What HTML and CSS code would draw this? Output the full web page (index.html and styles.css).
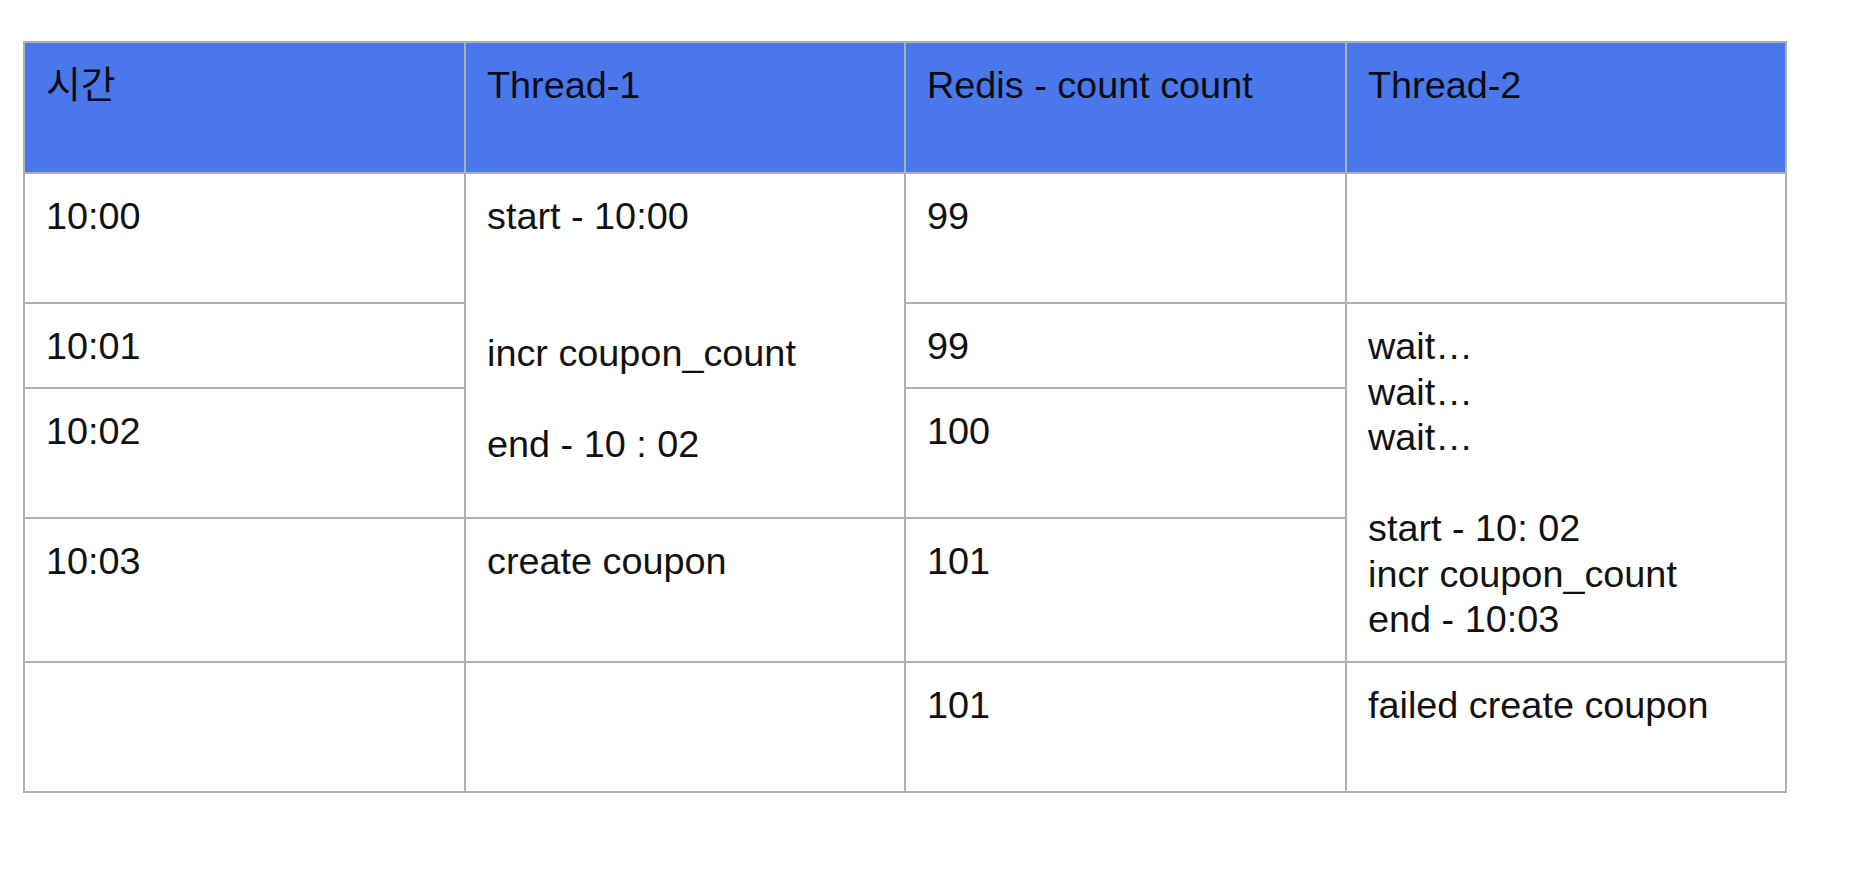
FILE: index.html
```html
<!DOCTYPE html>
<html lang="ko">
<head>
<meta charset="utf-8">
<title>Redis coupon count timeline</title>
<link rel="stylesheet" href="styles.css">
</head>
<body>
<table class="timeline">
  <colgroup>
    <col class="c1"><col class="c2"><col class="c3"><col class="c4">
  </colgroup>
  <thead>
    <tr class="row-head">
      <th>시간</th>
      <th>Thread-1</th>
      <th>Redis - count count</th>
      <th>Thread-2</th>
    </tr>
  </thead>
  <tbody>
    <tr class="row-a">
      <td>10:00</td>
      <td rowspan="3">start - 10:00<br><br><br>incr coupon_count<br><br>end - 10 : 02</td>
      <td>99</td>
      <td></td>
    </tr>
    <tr class="row-b">
      <td>10:01</td>
      <td>99</td>
      <td rowspan="3">wait…<br>wait…<br>wait…<br><br>start - 10: 02<br>incr coupon_count<br>end - 10:03</td>
    </tr>
    <tr class="row-c">
      <td>10:02</td>
      <td>100</td>
    </tr>
    <tr class="row-d">
      <td>10:03</td>
      <td>create coupon</td>
      <td>101</td>
    </tr>
    <tr class="row-e">
      <td></td>
      <td></td>
      <td>101</td>
      <td>failed create coupon</td>
    </tr>
  </tbody>
</table>
</body>
</html>
```
FILE: styles.css
```css
html, body {
  margin: 0;
  padding: 0;
  background: #ffffff;
}

body {
  padding: 41px 0 0 23px;
  font-family: "Liberation Sans", Arial, "Noto Sans CJK KR", sans-serif;
  color: #111111;
}

.timeline {
  border-collapse: collapse;
  table-layout: fixed;
  width: 1764px;
}

.c1 { width: 441px; }
.c2 { width: 440px; }
.c3 { width: 441px; }
.c4 { width: 440px; }

.timeline th,
.timeline td {
  border: 2px solid #b0b0b0;
  padding: 20px 21px 0 21px;
  vertical-align: top;
  text-align: left;
  font-size: 37.8px;
  line-height: 45.5px;
  font-weight: normal;
  white-space: nowrap;
}

.timeline th {
  background: #4a77e9;
  color: #0c0c14;
}

.row-head { height: 131px; }
.row-a { height: 130px; }
.row-b { height: 85px; }
.row-c { height: 130px; }
.row-d { height: 144px; }
.row-e { height: 130px; }
```
